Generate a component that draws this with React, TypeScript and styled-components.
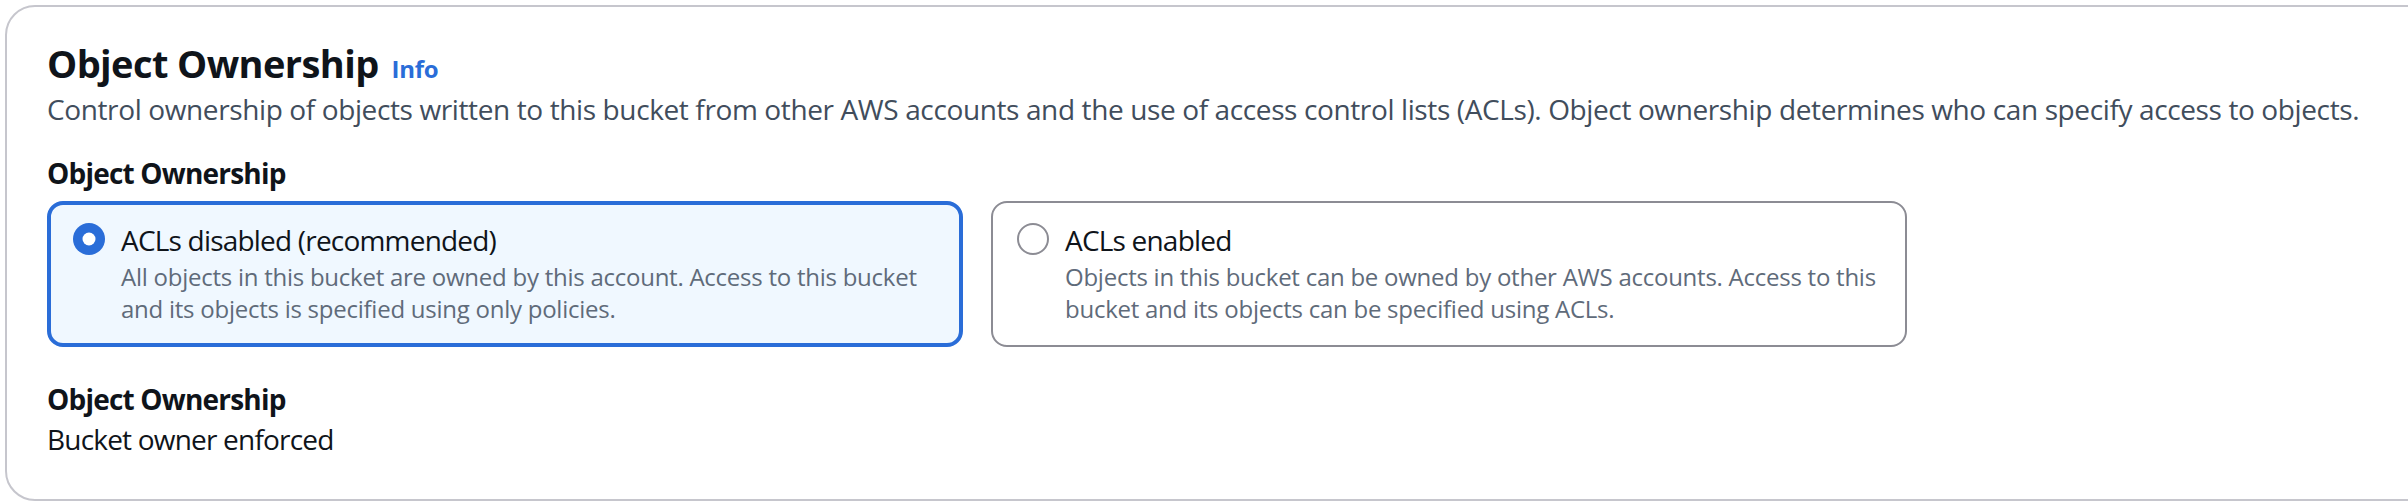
import React, { useState } from "react";
import styled, { createGlobalStyle } from "styled-components";

const GlobalStyle = createGlobalStyle`
  html, body {
    margin: 0;
    padding: 0;
    background: #ffffff;
    overflow: hidden;
  }
  body {
    font-family: "Open Sans", "Noto Sans", sans-serif;
    color: #0f141a;
  }
`;

const Page = styled.div`
  padding: 5px 0 0 5px;
  width: 2460px;
`;

const Container = styled.section`
  box-sizing: border-box;
  height: 496px;
  border: 2px solid #c6c6cd;
  border-radius: 30px;
  padding: 34px 40px 0 40px;
  background: #fff;
`;

const Header = styled.div`
  display: flex;
  align-items: baseline;
  gap: 13px;
`;

const Title = styled.h2`
  margin: 0;
  font-size: 38px;
  line-height: 44px;
  font-weight: 700;
  letter-spacing: -0.6px;
  color: #0f141a;
`;

const InfoLink = styled.a`
  font-size: 24px;
  font-weight: 700;
  color: #2a6dd8;
  text-decoration: none;
  letter-spacing: -0.3px;
  cursor: pointer;
`;

const Description = styled.p`
  margin: 4px 0 0 0;
  font-size: 28px;
  line-height: 40px;
  color: #414d5c;
  letter-spacing: -0.38px;
`;

const FieldLabel = styled.div`
  margin-top: 24px;
  font-size: 28px;
  line-height: 40px;
  font-weight: 700;
  letter-spacing: -0.8px;
  color: #0f141a;
`;

const Tiles = styled.div`
  margin-top: 8px;
  display: grid;
  grid-template-columns: repeat(2, 916px);
  gap: 28px;
`;

const Tile = styled.label<{ $selected: boolean }>`
  box-sizing: border-box;
  height: 146px;
  display: flex;
  align-items: flex-start;
  gap: 16px;
  border-radius: 16px;
  cursor: pointer;
  border: ${(p) => (p.$selected ? "4px solid #2a6dd8" : "2px solid #8c8c94")};
  background: ${(p) => (p.$selected ? "#f0f8ff" : "#ffffff")};
  padding: ${(p) => (p.$selected ? "18px 22px 0 22px" : "20px 24px 0 24px")};
`;

const RadioDot = styled.svg`
  flex: none;
  width: 32px;
  height: 32px;
`;

const TileBody = styled.div`
  display: flex;
  flex-direction: column;
`;

const TileTitle = styled.span`
  font-size: 28px;
  line-height: 34px;
  color: #0f141a;
  letter-spacing: -0.8px;
`;

const TileText = styled.span`
  margin-top: 4px;
  font-size: 24px;
  line-height: 32px;
  color: #5f6b7a;
  letter-spacing: -0.25px;
`;

const Summary = styled.div`
  margin-top: 32px;
  display: flex;
  flex-direction: column;
`;

const SummaryLabel = styled(FieldLabel)`
  margin-top: 0;
`;

const SummaryValue = styled.div`
  font-size: 28px;
  line-height: 40px;
  color: #0f141a;
  letter-spacing: -0.8px;
`;

const Radio = ({ checked }: { checked: boolean }) => (
  <RadioDot viewBox="0 0 32 32">
    {checked ? (
      <>
        <circle cx="16" cy="16" r="16" fill="#2a6dd8" />
        <circle cx="16" cy="16" r="6.5" fill="#fff" />
      </>
    ) : (
      <circle cx="16" cy="16" r="15" fill="#fff" stroke="#8c8c94" strokeWidth="2" />
    )}
  </RadioDot>
);

const options = [
  {
    id: "disabled",
    title: "ACLs disabled (recommended)",
    text: "All objects in this bucket are owned by this account. Access to this bucket and its objects is specified using only policies.",
  },
  {
    id: "enabled",
    title: "ACLs enabled",
    text: "Objects in this bucket can be owned by other AWS accounts. Access to this bucket and its objects can be specified using ACLs.",
  },
];

const App = () => {
  const [value, setValue] = useState("disabled");

  return (
    <Page>
      <GlobalStyle />
      <Container>
        <Header>
          <Title>Object Ownership</Title>
          <InfoLink>Info</InfoLink>
        </Header>
        <Description>
          Control ownership of objects written to this bucket from other AWS accounts and the use of access
          control lists (ACLs). Object ownership determines who can specify access to objects.
        </Description>
        <FieldLabel>Object Ownership</FieldLabel>
        <Tiles>
          {options.map((o) => (
            <Tile key={o.id} $selected={value === o.id} onClick={() => setValue(o.id)}>
              <Radio checked={value === o.id} />
              <TileBody>
                <TileTitle>{o.title}</TileTitle>
                <TileText>{o.text}</TileText>
              </TileBody>
            </Tile>
          ))}
        </Tiles>
        <Summary>
          <SummaryLabel>Object Ownership</SummaryLabel>
          <SummaryValue>Bucket owner enforced</SummaryValue>
        </Summary>
      </Container>
    </Page>
  );
};

export default App;
